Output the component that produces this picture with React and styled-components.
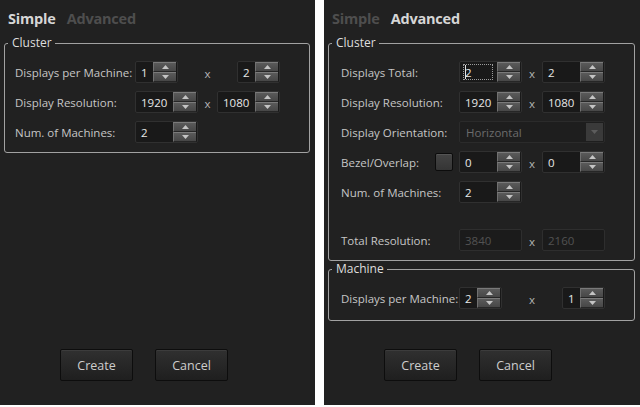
import React from "react";
import styled, { createGlobalStyle } from "styled-components";

const GlobalStyle = createGlobalStyle`
  html, body {
    margin: 0;
    padding: 0;
    background: #ffffff;
  }
  body {
    font-family: "Open Sans", "Liberation Sans", sans-serif;
  }
`;

const Screen = styled.div`
  box-sizing: border-box;
  display: flex;
  gap: 9px;
  height: 407px;
  padding-bottom: 2px;
  width: 640px;
`;

const Dialog = styled.div`
  background: #212121;
  display: flex;
  flex-direction: column;
  width: ${(p) => p.$width}px;
`;

const TabBar = styled.div`
  align-items: center;
  box-sizing: border-box;
  display: flex;
  gap: 11px;
  height: 35px;
  padding: 3px 0 0 8px;
`;

const Tab = styled.div`
  color: ${(p) => (p.$active ? "#d6d6d6" : "#4e4e4e")};
  font-size: 14.5px;
  font-weight: 700;
  letter-spacing: -0.2px;
  line-height: 16px;
`;

const GroupBox = styled.fieldset`
  border: 1px solid #a2a2a2;
  border-radius: 3px;
  margin: 0 5px 0 4px;
  min-width: 0;
  padding: 10px 0 ${(p) => p.$bottom}px 0;
`;

const Legend = styled.legend`
  color: #dedede;
  font-size: 12px;
  line-height: 16px;
  margin-left: 3px;
  padding: 0 3px 0 4px;
`;

const Rows = styled.div`
  display: flex;
  flex-direction: column;
  gap: 8px;
  padding-left: ${(p) => p.$indent}px;
`;

const Row = styled.div`
  align-items: center;
  display: grid;
  grid-template-columns: ${(p) => p.$cols};
  height: 22px;
  margin-top: ${(p) => p.$gapAbove || 0}px;
`;

const Label = styled.div`
  align-items: center;
  color: #c6c6c6;
  display: flex;
  font-size: 11.5px;
  justify-content: space-between;
  padding-right: 6px;
  white-space: nowrap;
`;

const Times = styled.div`
  color: #b4b4b4;
  font-size: 11.5px;
  padding-top: 3px;
  text-align: center;
`;

const SpinBox = styled.div`
  background: #191919;
  border: 1px solid #303030;
  border-radius: 2px;
  box-sizing: border-box;
  display: flex;
  height: 22px;
  justify-self: ${(p) => (p.$end ? "end" : "start")};
  width: ${(p) => p.$w}px;
`;

const SpinValue = styled.div`
  align-items: center;
  color: #e8e8e8;
  display: flex;
  flex: 1;
  font-size: 11.5px;
  padding-left: 5px;
`;

const FocusRing = styled.div`
  align-items: center;
  border: 1px dotted #9c9c9c;
  color: #e8e8e8;
  display: flex;
  flex: 1;
  font-size: 11.5px;
  margin: 2px 4px 2px 3px;
  padding-left: 1px;
`;

const Caret = styled.span`
  background: #e4e4e4;
  display: inline-block;
  height: 14px;
  margin-right: -1px;
  width: 1px;
`;

const SpinButtons = styled.div`
  display: flex;
  flex-direction: column;
  margin-right: 1px;
  width: 23px;
`;

const SpinButton = styled.div`
  align-items: center;
  background: linear-gradient(#5a5a5a, #474747);
  border-bottom: 1px solid #262626;
  border-left: 1px solid #707070;
  border-top: 1px solid #7a7a7a;
  box-sizing: border-box;
  display: flex;
  flex: 1;
  justify-content: center;
`;

const Combo = styled.div`
  background: #1e1e1e;
  border: 1px solid #2b2b2b;
  border-radius: 2px;
  box-sizing: border-box;
  display: flex;
  grid-column: 2 / span 3;
  height: 22px;
`;

const ComboText = styled.div`
  align-items: center;
  color: #6c6c6c;
  display: flex;
  flex: 1;
  font-size: 11.5px;
  padding-left: 6px;
`;

const ComboButton = styled.div`
  align-items: center;
  background: #3a3a3a;
  display: flex;
  justify-content: center;
  margin: 1px;
  width: 17px;
`;

const CheckBox = styled.div`
  background: linear-gradient(#444444, #353535);
  border: 1px solid #0c0c0c;
  border-radius: 2px;
  box-shadow: inset 0 1px 0 #545454;
  box-sizing: border-box;
  height: 18px;
  width: 18px;
`;

const ReadOnlyField = styled.div`
  align-items: center;
  background: #1b1b1b;
  border: 1px solid #2e2e2e;
  border-radius: 2px;
  box-sizing: border-box;
  color: #525252;
  display: flex;
  font-size: 11.5px;
  height: 22px;
  padding-left: 5px;
  width: 63px;
`;

const ButtonBar = styled.div`
  display: flex;
  gap: 22px;
  margin-top: auto;
  padding: 0 0 24px 60px;
`;

const Button = styled.button`
  background: linear-gradient(#303030, #272727 50%, #1f1f1f);
  border: 1px solid #0d0d0d;
  border-radius: 2px;
  box-shadow: inset 0 1px 0 #3c3c3c;
  color: #cdcdcd;
  font-family: inherit;
  font-size: 12.5px;
  height: 32px;
  padding: 0;
  width: 73px;
`;

const Arrow = ({ up, color = "#c4c4c4" }) => (
  <svg width="7" height="4" viewBox="0 0 7 4">
    <polygon points={up ? "0,4 7,4 3.5,0" : "0,0 7,0 3.5,4"} fill={color} />
  </svg>
);

const Spin = ({ value, w = 43, end, focused }) => (
  <SpinBox $w={w} $end={end}>
    {focused ? (
      <FocusRing>
        <Caret />
        {value}
      </FocusRing>
    ) : (
      <SpinValue>{value}</SpinValue>
    )}
    <SpinButtons>
      <SpinButton>
        <Arrow up />
      </SpinButton>
      <SpinButton>
        <Arrow />
      </SpinButton>
    </SpinButtons>
  </SpinBox>
);

const LEFT_COLS = "120px 63px 19px 63px";
const RIGHT_COLS = "118px 63px 20px 63px";

const Tabs = ({ active }) => (
  <TabBar>
    <Tab $active={active === "simple"}>Simple</Tab>
    <Tab $active={active === "advanced"}>Advanced</Tab>
  </TabBar>
);

const Buttons = () => (
  <ButtonBar>
    <Button>Create</Button>
    <Button>Cancel</Button>
  </ButtonBar>
);

const SimpleDialog = () => (
  <Dialog $width={315}>
    <Tabs active="simple" />
    <GroupBox $bottom={9}>
      <Legend>Cluster</Legend>
      <Rows $indent={10}>
        <Row $cols={LEFT_COLS}>
          <Label>Displays per Machine:</Label>
          <Spin value="1" />
          <Times>x</Times>
          <Spin value="2" end />
        </Row>
        <Row $cols={LEFT_COLS}>
          <Label>Display Resolution:</Label>
          <Spin value="1920" w={63} />
          <Times>x</Times>
          <Spin value="1080" w={63} />
        </Row>
        <Row $cols={LEFT_COLS}>
          <Label>Num. of Machines:</Label>
          <Spin value="2" w={63} />
        </Row>
      </Rows>
    </GroupBox>
    <Buttons />
  </Dialog>
);

const AdvancedDialog = () => (
  <Dialog $width={316}>
    <Tabs active="advanced" />
    <GroupBox $bottom={9}>
      <Legend>Cluster</Legend>
      <Rows $indent={12}>
        <Row $cols={RIGHT_COLS}>
          <Label>Displays Total:</Label>
          <Spin value="2" w={63} focused />
          <Times>x</Times>
          <Spin value="2" w={63} />
        </Row>
        <Row $cols={RIGHT_COLS}>
          <Label>Display Resolution:</Label>
          <Spin value="1920" w={63} />
          <Times>x</Times>
          <Spin value="1080" w={63} />
        </Row>
        <Row $cols={RIGHT_COLS}>
          <Label>Display Orientation:</Label>
          <Combo>
            <ComboText>Horizontal</ComboText>
            <ComboButton>
              <Arrow color="#5c5c5c" />
            </ComboButton>
          </Combo>
        </Row>
        <Row $cols={RIGHT_COLS}>
          <Label>
            Bezel/Overlap:
            <CheckBox />
          </Label>
          <Spin value="0" w={63} />
          <Times>x</Times>
          <Spin value="0" w={63} />
        </Row>
        <Row $cols={RIGHT_COLS}>
          <Label>Num. of Machines:</Label>
          <Spin value="2" w={63} />
        </Row>
        <Row $cols={RIGHT_COLS} $gapAbove={18}>
          <Label>Total Resolution:</Label>
          <ReadOnlyField>3840</ReadOnlyField>
          <Times>x</Times>
          <ReadOnlyField>2160</ReadOnlyField>
        </Row>
      </Rows>
    </GroupBox>
    <GroupBox $bottom={11}>
      <Legend>Machine</Legend>
      <Rows $indent={12}>
        <Row $cols={RIGHT_COLS}>
          <Label>Displays per Machine:</Label>
          <Spin value="2" />
          <Times>x</Times>
          <Spin value="1" end />
        </Row>
      </Rows>
    </GroupBox>
    <Buttons />
  </Dialog>
);

export default function App() {
  return (
    <>
      <GlobalStyle />
      <Screen>
        <SimpleDialog />
        <AdvancedDialog />
      </Screen>
    </>
  );
}
